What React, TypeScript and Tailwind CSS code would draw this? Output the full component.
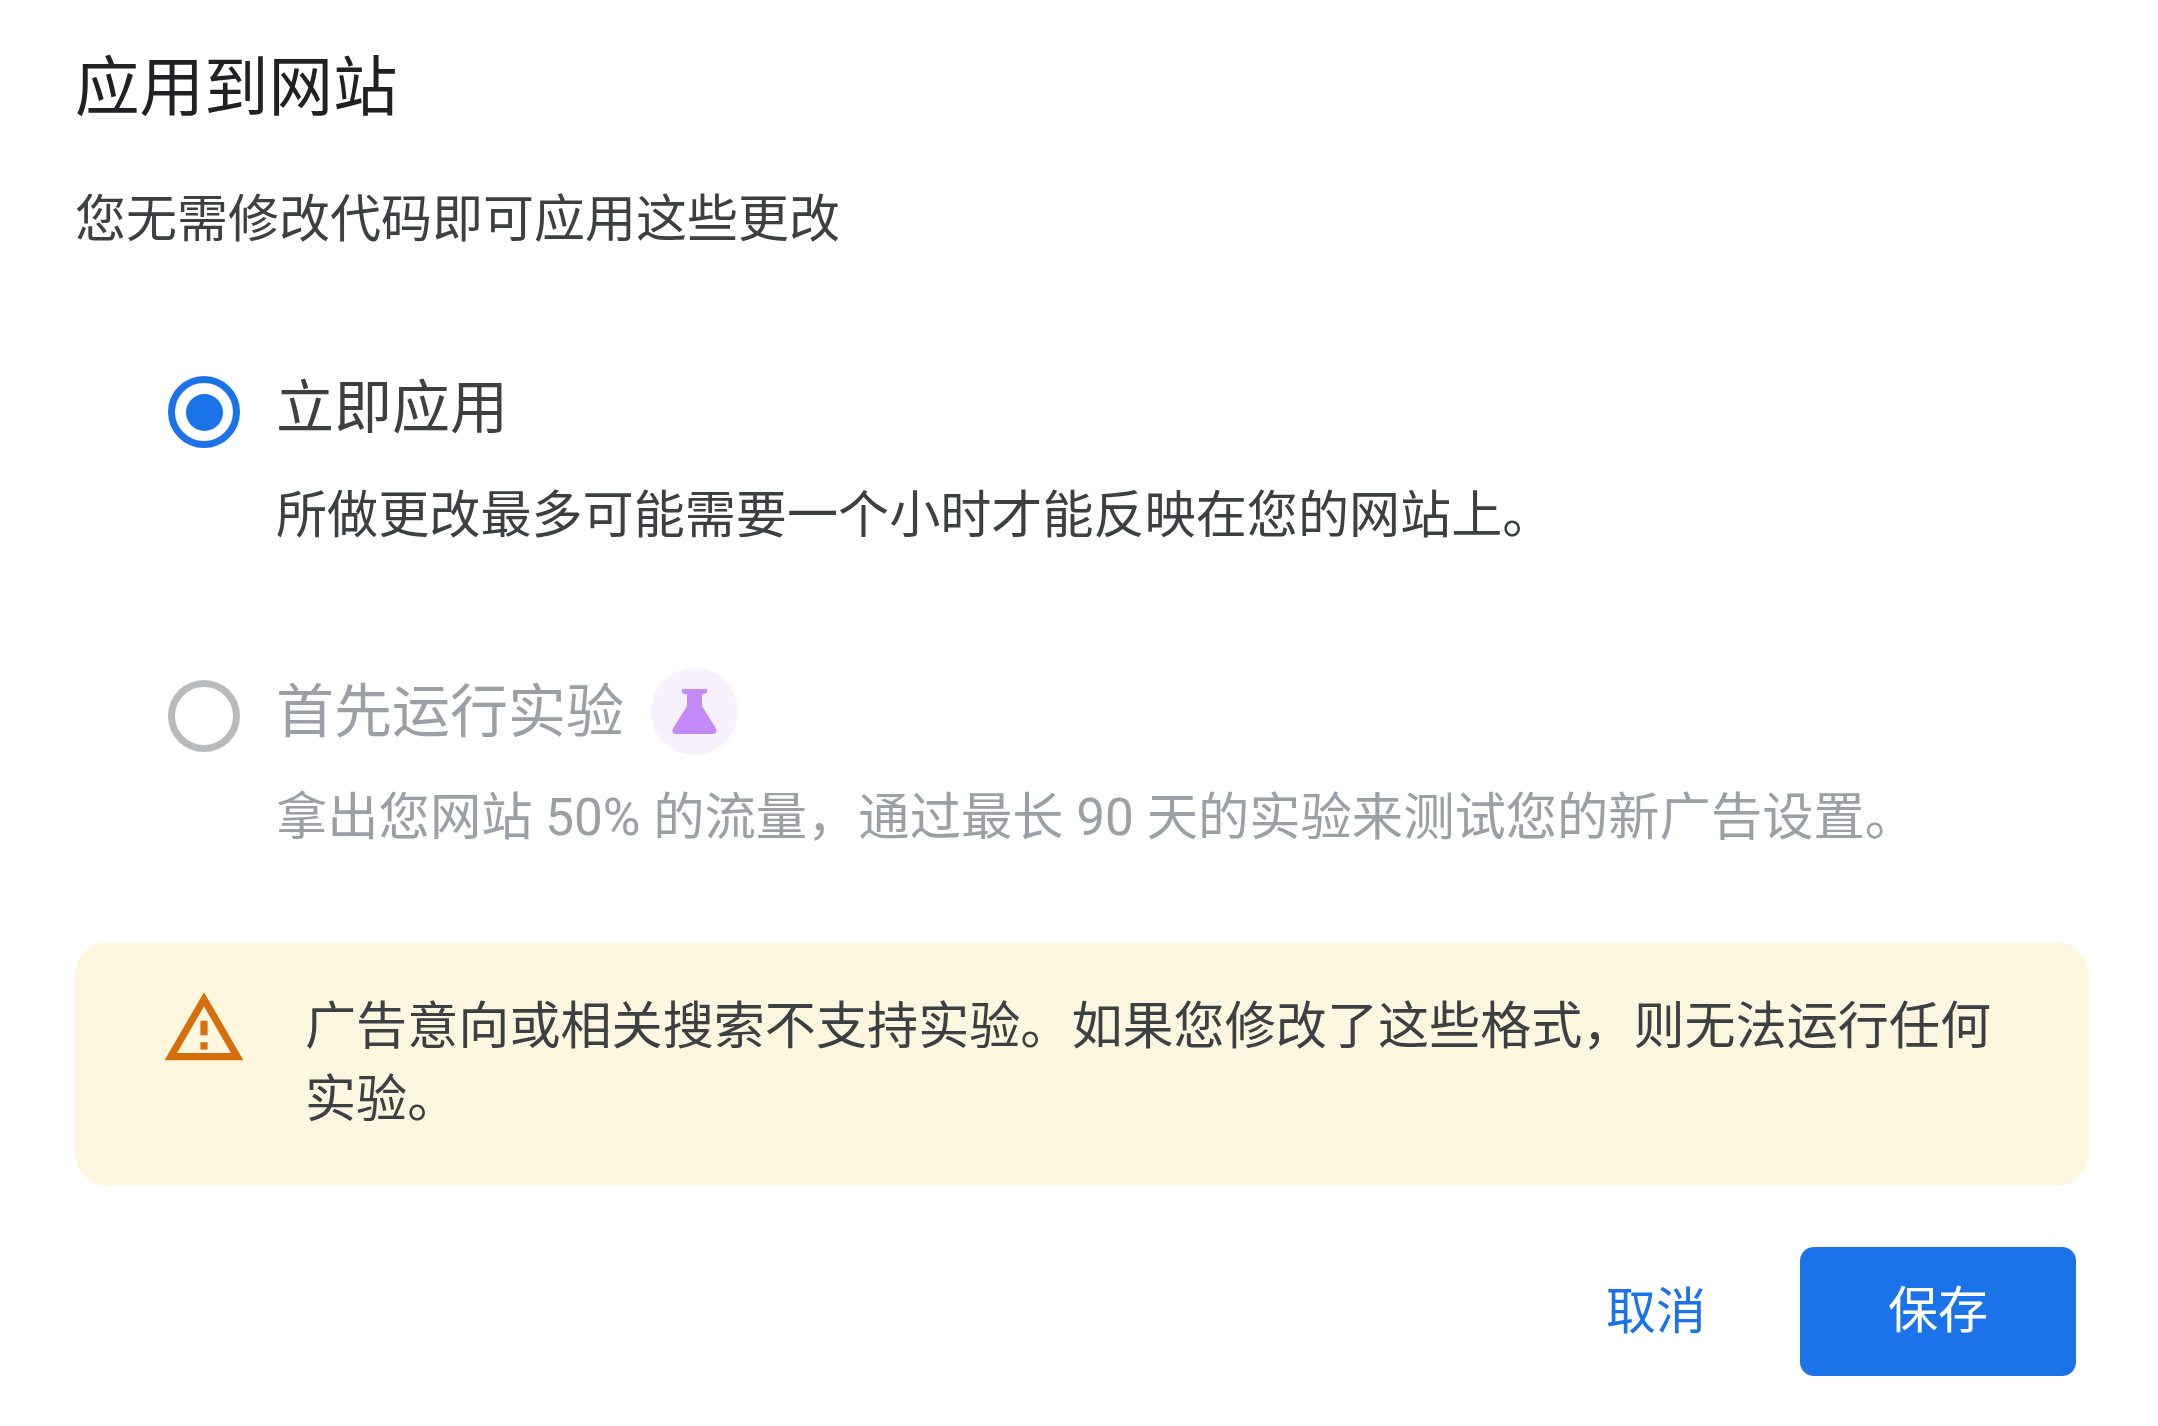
import React from "react";

const Radio = ({ checked = false }: { checked?: boolean }) => (
  <div
    className={
      checked
        ? "flex h-[72px] w-[72px] shrink-0 items-center justify-center rounded-full border-[7px] border-[#1a73e8] bg-white"
        : "h-[72px] w-[72px] shrink-0 rounded-full border-[7px] border-[#b9babc] bg-white"
    }
  >
    {checked && <div className="h-[37px] w-[37px] rounded-full bg-[#1a73e8]" />}
  </div>
);

const Flask = () => (
  <svg width={45} height={45} viewBox="0 0 45 45" fill="#c58af9">
    <path d="M10 0h25v4l-5 1.5V17l14 22.5c1.5 2.6 0 5.5-3 5.5H4c-3 0-4.5-2.9-3-5.5L15 17V5.5L10 4z" />
  </svg>
);

const WarningIcon = () => (
  <svg width={86} height={86} viewBox="0 0 24 24" fill="#d56e0c" className="shrink-0">
    <path d="M12 5.99L19.53 19H4.47L12 5.99M12 2L1 21h22L12 2zm1 14h-2v2h2v-2zm0-6h-2v4h2v-4z" />
  </svg>
);

export default function App() {
  return (
    <div className="h-[1426px] w-[2158px] overflow-hidden bg-white pl-[75px] pr-[69px] pt-[43px] font-['Roboto','Noto_Sans_CJK_SC',sans-serif]">
      <div className="text-[64.5px] leading-[90px] text-[#202124]">应用到网站</div>
      <div className="mt-[52px] text-[51px] leading-[70px] text-[#3c4043]">您无需修改代码即可应用这些更改</div>

      <div className="mt-[113px] pl-[93px]">
        <div className="flex gap-[36px]">
          <div className="pt-[8px]">
            <Radio checked />
          </div>
          <div>
            <div className="text-[58px] leading-[80px] text-[#3c4043]">立即应用</div>
            <div className="mt-[33px] text-[51.1px] leading-[70px] text-[#3c4043]">
              所做更改最多可能需要一个小时才能反映在您的网站上。
            </div>
          </div>
        </div>

        <div className="mt-[117px] flex gap-[36px]">
          <div className="pt-[12px]">
            <Radio />
          </div>
          <div>
            <div className="flex items-center gap-[27px]">
              <div className="text-[58px] leading-[80px] text-[#9aa0a6]">首先运行实验</div>
              <div className="flex h-[87px] w-[87px] items-center justify-center rounded-full bg-[#f7f1fe]">
                <Flask />
              </div>
            </div>
            <div className="mt-[28px] text-[51.3px] leading-[70px] text-[#9aa0a6]">
              拿出您网站 50% 的流量，通过最长 90 天的实验来测试您的新广告设置。
            </div>
          </div>
        </div>
      </div>

      <div className="mt-[89px] flex h-[244px] items-start gap-[58px] rounded-[33px] bg-[#fef7e0] pl-[86px] pt-[43px]">
        <WarningIcon />
        <div className="mt-[5px] w-[1700px] text-[51.1px] leading-[73px] text-[#3c4043]">
          广告意向或相关搜索不支持实验。如果您修改了这些格式，则无法运行任何实验。
        </div>
      </div>

      <div className="mt-[61px] flex items-center justify-end gap-[94px] pr-[13px]">
        <button className="text-[50px] leading-[70px] text-[#1a73e8]">取消</button>
        <button className="h-[129px] w-[276px] rounded-[14px] bg-[#1a73e8] text-[50px] text-white">保存</button>
      </div>
    </div>
  );
}
